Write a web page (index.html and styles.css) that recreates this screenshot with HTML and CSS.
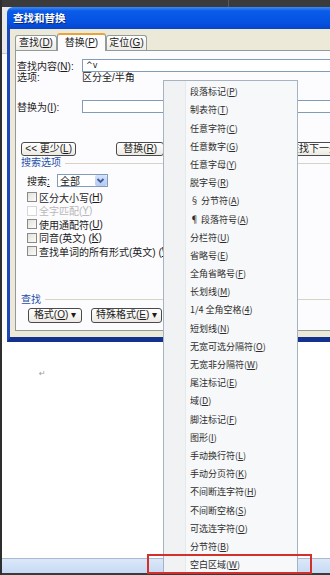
FILE: index.html
```html
<!DOCTYPE html>
<html lang="zh-CN">
<head>
    <meta charset="UTF-8">
    <meta name="viewport" content="width=device-width, initial-scale=1.0">
    <title>查找和替换</title>
    <link rel="stylesheet" href="styles.css">
</head>
<body>
    <div class="screen">
        <div class="topbar"><span class="topbar-split"></span></div>

        <div class="workspace">
            <div class="dialog">
                <div class="titlebar">查找和替换</div>
                <div class="dialog-body">
                    <div class="tabs">
                        <span class="tab tab-find">查找(<u>D</u>)</span>
                        <span class="tab tab-replace active">替换(<u>P</u>)</span>
                        <span class="tab tab-goto">定位(<u>G</u>)</span>
                    </div>

                    <div class="panel">
                        <div class="field-row">
                            <span class="field-label">查找内容(<u>N</u>):</span>
                            <div class="textbox"><span class="caret-text">^v</span></div>
                        </div>
                        <div class="option-row">
                            <span class="field-label">选项:</span>
                            <span>区分全/半角</span>
                        </div>
                        <div class="field-row replace-row">
                            <span class="field-label">替换为(<u>I</u>):</span>
                            <div class="textbox"></div>
                        </div>

                        <div class="button-row">
                            <button class="btn btn-less">&lt;&lt; 更少(<u>L</u>)</button>
                            <button class="btn btn-replace">替换(<u>R</u>)</button>
                            <button class="btn btn-next">查找下一处(<u>F</u>)</button>
                        </div>

                        <div class="group-title">搜索选项</div>
                        <div class="search-row">
                            <span class="search-label">搜索<u>:</u></span>
                            <div class="select">
                                <span class="select-value">全部</span>
                                <span class="select-btn">
                                    <svg width="11" height="11" viewBox="0 0 11 11"><path d="M2.5 4 L5.5 7 L8.5 4" fill="none" stroke="#3f5c93" stroke-width="1.8"/></svg>
                                </span>
                            </div>
                        </div>

                        <ul class="checks">
                            <li><span class="check"></span>区分大小写(<u>H</u>)</li>
                            <li class="disabled"><span class="check"></span>全字匹配(<u>Y</u>)</li>
                            <li><span class="check"></span>使用通配符(<u>U</u>)</li>
                            <li><span class="check"></span>同音(英文)&nbsp;(<u>K</u>)</li>
                            <li><span class="check"></span>查找单词的所有形式(英文)&nbsp;(<u>W</u>)</li>
                        </ul>

                        <div class="group-title find-title">查找</div>
                        <div class="bottom-buttons">
                            <button class="btn btn-format">格式(<u>O</u>) ▾</button>
                            <button class="btn btn-special">特殊格式(<u>E</u>) ▾</button>
                        </div>
                    </div>
                </div>
            </div>

            <div class="page">
                <span class="para-mark">↵</span>
            </div>
        </div>

        <div class="statusbar"></div>
        <div class="bottombar"></div>

        <ul class="special-menu">
            <li>段落标记(<u>P</u>)</li>
            <li>制表符(<u>T</u>)</li>
            <li>任意字符(<u>C</u>)</li>
            <li>任意数字(<u>G</u>)</li>
            <li>任意字母(<u>Y</u>)</li>
            <li>脱字号(<u>R</u>)</li>
            <li>§ 分节符(<u>A</u>)</li>
            <li>¶ 段落符号(<u>A</u>)</li>
            <li>分栏符(<u>U</u>)</li>
            <li>省略号(<u>E</u>)</li>
            <li>全角省略号(<u>F</u>)</li>
            <li>长划线(<u>M</u>)</li>
            <li>1/4 全角空格(<u>4</u>)</li>
            <li>短划线(<u>N</u>)</li>
            <li>无宽可选分隔符(<u>O</u>)</li>
            <li>无宽非分隔符(<u>W</u>)</li>
            <li>尾注标记(<u>E</u>)</li>
            <li>域(<u>D</u>)</li>
            <li>脚注标记(<u>F</u>)</li>
            <li>图形(<u>I</u>)</li>
            <li>手动换行符(<u>L</u>)</li>
            <li>手动分页符(<u>K</u>)</li>
            <li>不间断连字符(<u>H</u>)</li>
            <li>不间断空格(<u>S</u>)</li>
            <li>可选连字符(<u>O</u>)</li>
            <li>分节符(<u>B</u>)</li>
            <li>空白区域(<u>W</u>)</li>
        </ul>

        <div class="highlight-box"></div>
    </div>
</body>
</html>
```

FILE: styles.css
```css
* {
    box-sizing: border-box;
}
html, body {
    margin: 0;
    padding: 0;
}
body {
    width: 330px;
    height: 575px;
    overflow: hidden;
    background: #3a3a3a;
    font-family: "Liberation Sans", "Noto Sans CJK SC", sans-serif;
    font-size: 10px;
    color: #1b1b1b;
}
u {
    text-decoration: underline;
}
.screen {
    position: relative;
    width: 330px;
    height: 575px;
    display: flex;
    flex-direction: column;
    border-left: 2px solid #2e2e2e;
    overflow: hidden;
}
.topbar {
    flex: none;
    height: 7px;
    background: #3b3b3b;
    display: flex;
    padding-left: 226px;
}
.topbar-split {
    width: 1px;
    height: 7px;
    background: #5a5a5a;
}
.workspace {
    flex: none;
    height: 551px;
    display: flex;
    flex-direction: column;
    background: linear-gradient(#e9e9e9 0 46px, #c9c9c9 46px 47px, #fbfbfb 47px);
}

/* dialog window */
.dialog {
    flex: none;
    width: 345px;
    margin-left: 5px;
}
.titlebar {
    height: 22px;
    line-height: 22px;
    padding-left: 6px;
    border-radius: 6px 6px 0 0;
    background: linear-gradient(#3d8af7 0%, #0a5ce8 18%, #0552e2 70%, #0645c9 100%);
    color: #fff;
    font-weight: bold;
    font-size: 10.5px;
    text-shadow: 1px 1px 0 #0a2a7a;
}
.dialog-body {
    background: #ece9d8;
    border-left: 3px solid #1d47b8;
    border-bottom: 5px solid #15318e;
    padding: 4px 0 6px 5px;
}
.tabs {
    display: flex;
    align-items: flex-end;
    height: 17px;
}
.tab {
    height: 15px;
    line-height: 14px;
    text-align: center;
    border: 1px solid #919b9c;
    border-bottom: none;
    border-radius: 3px 3px 0 0;
    background: linear-gradient(#ffffff, #ecebe5);
}
.tab-find {
    width: 42px;
}
.tab-replace {
    width: 49px;
}
.tab-goto {
    width: 41px;
}
.tab.active {
    position: relative;
    z-index: 1;
    height: 18px;
    margin-bottom: -1px;
    line-height: 16px;
    background: #fcfcfe;
    border-top: 2px solid #e8a33a;
}
.panel {
    height: 281px;
    border: 1px solid #919b9c;
    background: #fcfcfe;
    padding: 8px 0 0 1px;
}
.field-row {
    display: flex;
    align-items: center;
    height: 13px;
}
.field-label {
    width: 65px;
    flex: none;
}
.textbox {
    width: 262px;
    height: 13px;
    border: 1px solid #7f9db9;
    background: #fff;
    padding-left: 3px;
    font-size: 8px;
    line-height: 11px;
}
.caret-text {
    font-family: "DejaVu Sans", sans-serif;
}
.option-row {
    display: flex;
    height: 12px;
    line-height: 12px;
}
.replace-row {
    margin-top: 16px;
}
.button-row {
    display: flex;
    margin-top: 29px;
    height: 14px;
}
.btn {
    height: 100%;
    padding: 0;
    border: 1px solid #4a4a4a;
    border-radius: 3px;
    background: linear-gradient(#ffffff, #eceae3);
    font-family: "Liberation Sans", "Noto Sans CJK SC", sans-serif;
    font-size: 10px;
    color: #1b1b1b;
    line-height: 12px;
    white-space: nowrap;
}
.btn-less {
    width: 58px;
    margin-left: 4px;
}
.btn-replace {
    width: 50px;
    margin-left: 40px;
}
.btn-next {
    width: 66px;
    margin-left: 121px;
    text-align: left;
    padding-left: 3px;
}
.group-title {
    display: flex;
    align-items: center;
    margin-top: 1px;
    margin-left: 4px;
    height: 12px;
    line-height: 12px;
    color: #1e4fa8;
}
.group-title::after {
    content: "";
    flex: 1;
    height: 1px;
    margin-left: 4px;
    background: #d6d3c4;
}
.search-row {
    display: flex;
    align-items: center;
    margin-top: 5px;
    height: 13px;
    padding-left: 10px;
}
.search-label {
    width: 30px;
}
.select {
    display: flex;
    align-items: center;
    width: 51px;
    height: 13px;
    border: 1px solid #7f9db9;
    background: #fff;
}
.select-value {
    flex: 1;
    padding-left: 2px;
}
.select-btn {
    width: 12px;
    height: 11px;
    display: flex;
    border-radius: 2px;
    background: linear-gradient(#d4e1fb, #b4cbf5);
}
.checks {
    list-style: none;
    margin: 3.5px 0 0;
    padding: 0 0 0 10px;
}
.checks li {
    display: flex;
    align-items: center;
    height: 13.5px;
    white-space: nowrap;
}
.check {
    width: 10px;
    height: 10px;
    margin-right: 2px;
    border: 1px solid #8a8a8a;
    background: linear-gradient(135deg, #e2e2dc, #fbfbf9);
}
.checks li.disabled {
    color: #b8b8b8;
}
.checks li.disabled .check {
    border-color: #d6d6d6;
    background: #fff;
}
.find-title {
    margin-top: 35.5px;
}
.bottom-buttons {
    display: flex;
    margin-top: 2px;
    height: 15px;
    padding-left: 11px;
}
.btn-format {
    width: 54px;
}
.btn-special {
    width: 71px;
    margin-left: 9px;
}

/* document page */
.page {
    flex: 1;
    background: #fff;
    padding: 25px 0 0 37px;
}
.para-mark {
    font-family: "DejaVu Sans", sans-serif;
    font-size: 8px;
    color: #9a9a9a;
}
.statusbar {
    flex: none;
    height: 15px;
    border-top: 1px solid #a9bbd2;
    background: linear-gradient(#dce8f8, #c6daf4);
}
.bottombar {
    flex: none;
    height: 2px;
    background: #3a3a3a;
}

/* special format dropdown */
.special-menu {
    position: absolute;
    left: 161px;
    top: 80px;
    width: 135px;
    height: 493px;
    margin: 0;
    padding: 2.2px 0 0;
    list-style: none;
    border: 1px solid #a5b3c3;
    background: linear-gradient(to right, #f1f2f4 0 21px, #e6e8eb 21px 22px, #f7f8f9 22px);
    font-family: "Noto Sans CJK SC", "Liberation Sans", sans-serif;
    font-size: 9px;
    color: #2d2d2d;
}
.special-menu li {
    height: 18.2px;
    line-height: 18.2px;
    padding-left: 26px;
    white-space: nowrap;
}
.highlight-box {
    position: absolute;
    left: 145px;
    top: 554px;
    width: 165px;
    height: 20px;
    border: 2px solid #d3302c;
}
```
